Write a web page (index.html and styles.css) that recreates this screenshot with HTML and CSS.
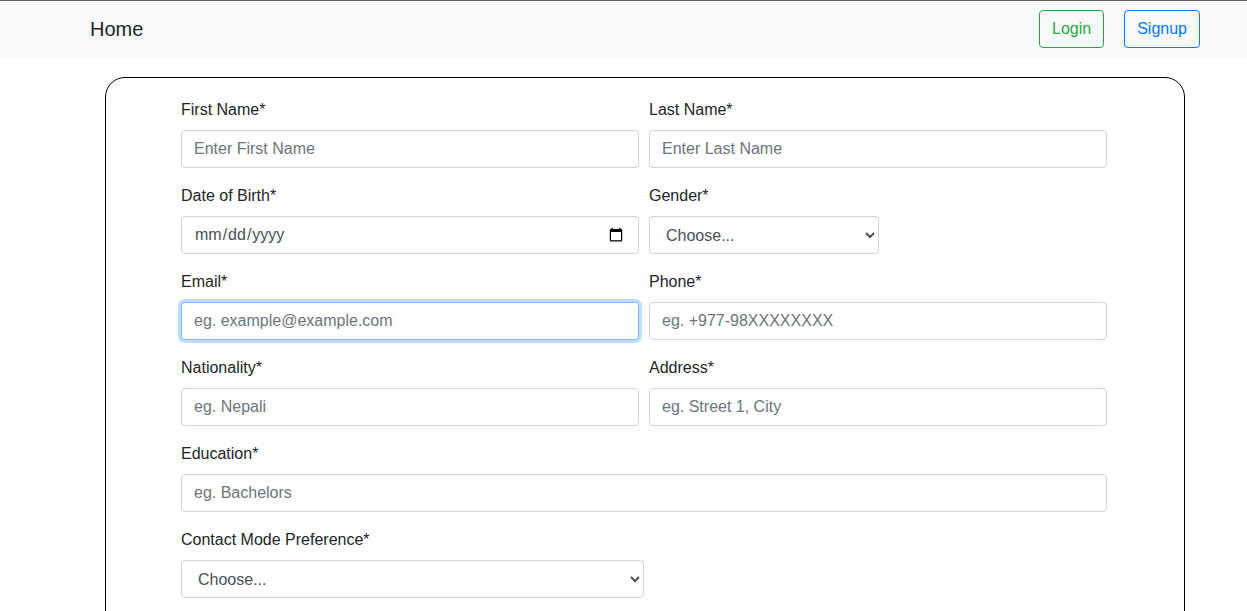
FILE: index.html
```html
<!DOCTYPE html>
<html lang="en">
<head>
<meta charset="utf-8">
<title>Signup</title>
<link rel="stylesheet" href="styles.css">
</head>
<body>
<nav class="navbar">
  <a class="brand" href="#">Home</a>
  <div class="nav-actions">
    <button class="btn btn-success">Login</button>
    <button class="btn btn-primary">Signup</button>
  </div>
</nav>
<main class="card">
  <form class="form">
    <div class="group">
      <label for="fn">First Name*</label>
      <input id="fn" class="control" type="text" placeholder="Enter First Name">
    </div>
    <div class="group">
      <label for="ln">Last Name*</label>
      <input id="ln" class="control" type="text" placeholder="Enter Last Name">
    </div>
    <div class="group">
      <label for="dob">Date of Birth*</label>
      <input id="dob" class="control" type="date">
    </div>
    <div class="group">
      <label for="gender">Gender*</label>
      <select id="gender" class="control select select-gender">
        <option>Choose...</option>
        <option>Male</option>
        <option>Female</option>
        <option>Other</option>
      </select>
    </div>
    <div class="group">
      <label for="email">Email*</label>
      <input id="email" class="control focused" type="email" placeholder="eg. example@example.com">
    </div>
    <div class="group">
      <label for="phone">Phone*</label>
      <input id="phone" class="control" type="tel" placeholder="eg. +977-98XXXXXXXX">
    </div>
    <div class="group">
      <label for="nat">Nationality*</label>
      <input id="nat" class="control" type="text" placeholder="eg. Nepali">
    </div>
    <div class="group">
      <label for="addr">Address*</label>
      <input id="addr" class="control" type="text" placeholder="eg. Street 1, City">
    </div>
    <div class="group full">
      <label for="edu">Education*</label>
      <input id="edu" class="control" type="text" placeholder="eg. Bachelors">
    </div>
    <div class="group full">
      <label for="contact">Contact Mode Preference*</label>
      <select id="contact" class="control select select-contact">
        <option>Choose...</option>
        <option>Email</option>
        <option>Phone</option>
      </select>
    </div>
  </form>
</main>
</body>
</html>
```

FILE: styles.css
```css
* {
  box-sizing: border-box;
}

html, body {
  margin: 0;
  padding: 0;
}

body {
  font-family: "Liberation Sans", Arial, sans-serif;
  font-size: 16px;
  line-height: 1.5;
  color: #212529;
  background: #fff;
}

.navbar {
  display: flex;
  align-items: center;
  justify-content: space-between;
  height: 57px;
  border-top: 1px solid #5f5f5f;
  background: #f8f9fa;
  padding: 0 47px 1px 90px;
}

.brand {
  font-size: 20px;
  color: #212529;
  text-decoration: none;
  line-height: 1.5;
}

.nav-actions {
  display: flex;
  gap: 20px;
}

.btn {
  font-family: inherit;
  font-size: 16px;
  line-height: 1.5;
  padding: 6px 12px;
  background: transparent;
  border: 1px solid;
  border-radius: 4px;
  cursor: pointer;
}

.btn-success {
  color: #28a745;
  border-color: #28a745;
}

.btn-primary {
  color: #007bff;
  border-color: #007bff;
}

.card {
  margin: 20px 62px 0 105px;
  border: 1px solid #000;
  border-radius: 20px;
  padding: 20px 77px 40px 75px;
  min-height: 560px;
}

.form {
  display: grid;
  grid-template-columns: 1fr 1fr;
  column-gap: 10px;
}

.group {
  margin-bottom: 16px;
  display: flex;
  flex-direction: column;
  align-items: flex-start;
}

.group.full {
  grid-column: 1 / -1;
}

label {
  display: inline-block;
  margin-bottom: 8px;
  line-height: 24px;
}

.control {
  display: block;
  width: 100%;
  height: 38px;
  padding: 6px 12px;
  font-family: inherit;
  font-size: 16px;
  line-height: 1.5;
  color: #495057;
  background: #fff;
  border: 1px solid #ced4da;
  border-radius: 4px;
  outline: none;
}

.control::placeholder {
  color: #6c757d;
  opacity: 1;
}

.focused {
  border-color: #80bdff;
  box-shadow: 0 0 0 3px rgba(0, 123, 255, 0.25);
}

.select {
  color: #495057;
}

.select-gender {
  width: 230px;
}

.select-contact {
  width: 463px;
}
```
